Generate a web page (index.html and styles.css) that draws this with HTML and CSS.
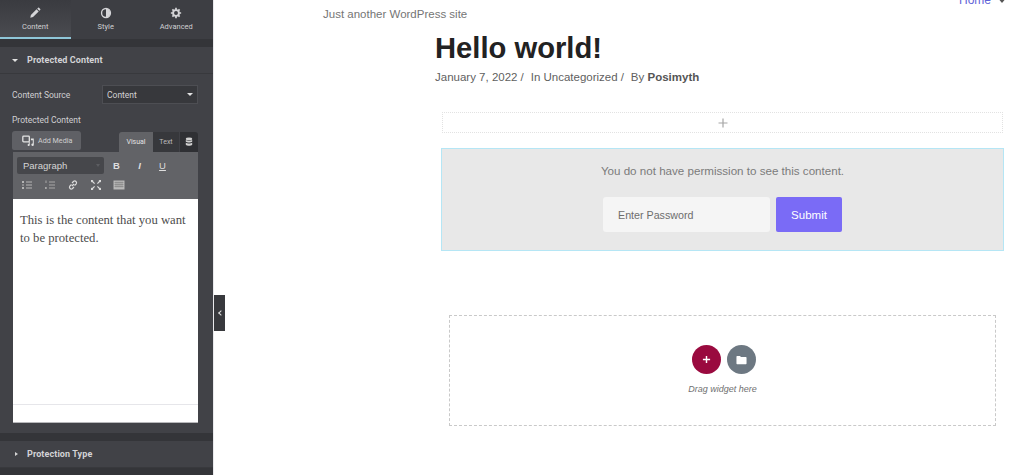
FILE: index.html
```html
<!DOCTYPE html>
<html lang="en">
<head>
<meta charset="utf-8">
<title>Hello world!</title>
<link rel="stylesheet" href="styles.css">
</head>
<body>
<div class="app">
  <aside class="panel">
    <nav class="tabs">
      <div class="tab active">
        <svg class="tab-icon" viewBox="0 0 14 14"><path d="M1.5 12.5l.7-3.2 6.6-6.6 2.5 2.5-6.6 6.6zM9.6 1.9l1-1a.8.8 0 0 1 1.1 0l1.4 1.4a.8.8 0 0 1 0 1.1l-1 1z" fill="#d5d5d8"/></svg>
        <span>Content</span>
      </div>
      <div class="tab">
        <svg class="tab-icon" viewBox="0 0 14 14"><circle cx="7" cy="7" r="5.2" fill="none" stroke="#d5d5d8" stroke-width="1.6"/><path d="M7 2a5 5 0 0 1 0 10z" fill="#d5d5d8"/></svg>
        <span>Style</span>
      </div>
      <div class="tab">
        <svg class="tab-icon" viewBox="0 0 14 14"><circle cx="7" cy="7" r="3.4" fill="none" stroke="#d5d5d8" stroke-width="2.2"/><path d="M7 1v2.4M7 10.6V13M1 7h2.4M10.6 7H13M2.8 2.8l1.7 1.7M9.5 9.5l1.7 1.7M11.2 2.8L9.5 4.5M4.5 9.5l-1.7 1.7" stroke="#d5d5d8" stroke-width="2"/></svg>
        <span>Advanced</span>
      </div>
    </nav>
    <div class="strip"></div>
    <header class="section-head open">
      <i class="caret-down"></i>
      <span>Protected Content</span>
    </header>
    <div class="section-body">
      <div class="field">
        <label>Content Source</label>
        <div class="select">Content<i class="caret-down small"></i></div>
      </div>
      <div class="field-label">Protected Content</div>
      <div class="editor-top">
        <button class="add-media">
          <svg viewBox="0 0 16 14" class="media-icon"><rect x="1" y="1" width="8" height="7" rx="1" fill="none" stroke="#e4e4e4" stroke-width="1.6"/><path d="M11 4h3.5v7.5a1.5 1.5 0 1 1-1.2-1.4V6H11zM9.5 8v4a1.3 1.3 0 1 1-1.2-1.3V8z" fill="#e4e4e4"/></svg>
          Add Media
        </button>
        <div class="mode-tabs">
          <span class="mode on">Visual</span>
          <span class="mode">Text</span>
          <span class="mode db">
            <svg viewBox="0 0 10 12" class="db-icon"><ellipse cx="5" cy="2.2" rx="4" ry="1.7" fill="#d0d0d0"/><path d="M1 3.6c1.5 1.3 6.500 1.300 8 0v2c-1.500 1.300-6.500 1.300-8 0zM1 7c1.500 1.300 6.500 1.300 8 0v2.400c-1.500 1.800-6.500 1.800-8 0z" fill="#d0d0d0"/></svg>
          </span>
        </div>
      </div>
      <div class="toolbar">
        <div class="tool-row">
          <div class="format">Paragraph<i class="fmt-caret"></i></div>
          <b class="tool t-b">B</b>
          <i class="tool t-i">I</i>
          <u class="tool t-u">U</u>
        </div>
        <div class="tool-row icons">
          <svg viewBox="0 0 12 12" class="ticon"><path d="M1 2h2v2H1zM1 8h2v2H1zM5 2.500h6v1H5zM5 8.500h6v1H5zM5 5.500h6v1H5zM1 5.500h2v1H1z" fill="#b5b5b5"/></svg>
          <svg viewBox="0 0 12 12" class="ticon"><path d="M1.500 1.500h1v2.500h-1zM1 8h2v.8H2v.4h1v.8H1zM5 2.500h6v1H5zM5 8.500h6v1H5zM5 5.500h6v1H5z" fill="#a8a8a8"/></svg>
          <svg viewBox="0 0 12 12" class="ticon"><path d="M5 7l2-2M4.500 5.500L2.800 7.200a1.800 1.800 0 0 0 2.500 2.500L7 8M7.500 6.500l1.700-1.700a1.800 1.800 0 0 0-2.500-2.500L5 4" fill="none" stroke="#dcdcdc" stroke-width="1.200"/></svg>
          <svg viewBox="0 0 12 12" class="ticon"><path d="M1 1h2.500L2.700 1.800 5 4.200 4.200 5 1.800 2.700 1 3.500zM11 1v2.500l-.8-.8L7.800 5 7 4.200l2.300-2.400L8.500 1zM1 11V8.500l.8.800L4.200 7l.8.800-2.300 2.400.8.800zM11 11H8.500l.8-.8L7 7.800l.8-.8 2.400 2.300.8-.8z" fill="#dcdcdc"/></svg>
          <svg viewBox="0 0 12 12" class="ticon"><path d="M.5 1.500h11v9H.5z" fill="#b9b9b9"/><path d="M1.500 3.500h9M1.500 5.500h9M1.500 7.500h9M3 2.500v6M5 2.500v6M7 2.500v6M9 2.500v6" stroke="#777" stroke-width=".5"/></svg>
        </div>
      </div>
      <div class="editor">
        <p class="editor-text">This is the content that you want to be protected.</p>
        <div class="editor-foot"></div>
      </div>
    </div>
    <div class="strip"></div>
    <header class="section-head">
      <i class="caret-right"></i>
      <span>Protection Type</span>
    </header>
    <div class="strip fill"></div>
  </aside>

  <main class="preview">
    <div class="handle"><i class="handle-arrow"></i></div>
    <div class="site-head">
      <span class="tagline">Just another WordPress site</span>
      <span class="nav-link">Home<i class="nav-caret"></i></span>
    </div>
    <div class="content">
      <h1 class="title">Hello world!</h1>
      <p class="meta"><span>January 7, 2022</span><span class="sep">/</span><span>In Uncategorized</span><span class="sep">/</span><span>By <b>Posimyth</b></span></p>
      <div class="add-row">
        <svg viewBox="0 0 10 10" class="add-plus"><path d="M5 .5v9M.5 5h9" stroke="#a6a6a6" stroke-width="1.200"/></svg>
      </div>
      <section class="protected">
        <p class="notice">You do not have permission to see this content.</p>
        <form class="pw-form">
          <div class="pw-input">Enter Password</div>
          <div class="pw-submit">Submit</div>
        </form>
      </section>
      <section class="dropzone">
        <div class="drop-btns">
          <span class="circle plus">
            <svg viewBox="0 0 10 10" class="circle-plus"><path d="M5 1v8M1 5h8" stroke="#fff" stroke-width="1.600"/></svg>
          </span>
          <span class="circle folder">
            <svg viewBox="0 0 12 10" class="circle-folder"><path d="M.5 1.200C.5.800.8.500 1.200.500h3l1.300 1.300h5.300c.4 0 .7.300.7.700v6.300c0 .4-.3.700-.7.700H1.200c-.4 0-.7-.3-.7-.7z" fill="#fff"/></svg>
          </span>
        </div>
        <p class="drop-text">Drag widget here</p>
      </section>
    </div>
  </main>
</div>
</body>
</html>
```

FILE: styles.css
```css
* { box-sizing: border-box; }
html, body { margin: 0; padding: 0; height: 100%; overflow: hidden; background: #fff; }
body { font-family: "Liberation Sans", Arial, sans-serif; }

.app { display: flex; width: 1024px; height: 475px; overflow: hidden; }

.panel {
  width: 214px;
  flex: none;
  height: 475px;
  background: #414247;
  color: #d5d5d8;
  font-family: Roboto, "Liberation Sans", sans-serif;
  display: flex;
  flex-direction: column;
  border-right: 1px solid #e9e9ec;
  overflow: hidden;
}

.tabs { display: flex; height: 39px; flex: none; background: #3d3e43; }
.tab {
  width: 70.5px;
  display: flex;
  flex-direction: column;
  align-items: center;
  padding-top: 7px;
  font-size: 7.500px;
  line-height: 10px;
  color: #cfcfd2;
}
.tab.active { border-bottom: 2px solid #8fc6d8; background: linear-gradient(#3a3b40, #4a4b50); }
.tab-icon { width: 12px; height: 12px; margin-bottom: 3px; display: block; }

.strip { height: 8px; flex: none; background: #343539; }
.strip.fill { flex: 1; }

.section-head {
  height: 27px;
  flex: none;
  display: flex;
  align-items: center;
  padding-left: 12px;
  font-size: 9px;
  font-weight: 700;
  color: #d3d3d6;
  border-bottom: 1px solid #38393d;
  letter-spacing: .1px;
}
.section-head span { margin-left: 9px; }

.caret-down {
  display: block;
  width: 0; height: 0;
  border-left: 3px solid transparent;
  border-right: 3px solid transparent;
  border-top: 3px solid #e2e2e2;
}
.caret-right {
  display: block;
  margin-left: 3px;
  width: 0; height: 0;
  border-top: 2.500px solid transparent;
  border-bottom: 2.500px solid transparent;
  border-left: 3px solid #d5d5d5;
}

.section-body { padding: 11px 15px 10px 12px; flex: none; height: 359px; }

.field { display: flex; align-items: center; justify-content: space-between; height: 19px; font-size: 8.500px; color: #cfcfd2; }
.field label { display: block; }
.select {
  width: 96px;
  height: 19px;
  background: #37383c;
  border: 1px solid #4d4e53;
  display: flex;
  align-items: center;
  justify-content: space-between;
  padding: 0 4px;
  font-size: 8.500px;
  color: #d2d2d5;
}
.field-label { margin-top: 10px; height: 12px; line-height: 12px; font-size: 8.500px; color: #cfcfd2; }

.editor-top { margin-top: 5px; display: flex; justify-content: space-between; align-items: flex-end; height: 21px; }
.add-media {
  width: 69px;
  height: 19px;
  margin-bottom: 2px;
  padding: 0 0 0 10px;
  background: #5f6065;
  border: 0;
  border-radius: 3px 3px 2px 2px;
  color: #cfcfcf;
  font-family: Roboto, "Liberation Sans", sans-serif;
  font-size: 7.200px;
  display: flex;
  align-items: center;
  gap: 3px;
}
.media-icon { width: 13px; height: 12px; flex: none; }

.mode-tabs { display: flex; margin-left: auto; height: 20px; }
.mode {
  width: 26px;
  display: flex;
  align-items: center;
  justify-content: center;
  font-size: 7px;
  background: #37383c;
  color: #bdbdbd;
}
.mode.on { width: 34px; background: #626367; color: #e2e2e2; border-radius: 3px 0 0 0; }
.mode.db { width: 18px; margin-left: 1px; background: #2f3034; border-radius: 0 3px 0 0; }
.db-icon { width: 8px; height: 10px; }

.toolbar { margin-left: 1px; height: 47px; background: #626367; padding: 5px 4px 0 4px; }
.tool-row { display: flex; align-items: center; height: 17px; }
.format {
  width: 87px;
  height: 17px;
  background: #46474b;
  border-radius: 2px;
  padding-left: 6px;
  display: flex;
  align-items: center;
  justify-content: space-between;
  font-family: "Liberation Sans", sans-serif;
  font-size: 9.500px;
  color: #d5d5d5;
}
.fmt-caret {
  margin-right: 4px;
  width: 0; height: 0;
  border-left: 2.500px solid transparent;
  border-right: 2.500px solid transparent;
  border-top: 3px solid #5c5d61;
}
.tool {
  width: 23px;
  text-align: center;
  font-family: "Liberation Sans", sans-serif;
  font-size: 9.500px;
  color: #dedede;
}
.t-b { margin-left: 1px; }
.t-i { font-weight: 700; }
.tool-row.icons { margin-top: 2px; padding-left: 4px; gap: 11px; }
.ticon { width: 12px; height: 12px; flex: none; }

.editor {
  margin-left: 1px;
  height: 224px;
  background: #fff;
  border-bottom: 1px solid #b8b8bb;
  display: flex;
  flex-direction: column;
  justify-content: space-between;
}
.editor-text {
  margin: 0;
  padding: 12px 7px 0 7px;
  font-family: "Liberation Serif", Georgia, serif;
  font-size: 12.700px;
  line-height: 18px;
  color: #4d4d4d;
}
.editor-foot { height: 18px; border-top: 1px solid #e6e6ea; }

.preview { position: relative; flex: 1; height: 475px; }

.handle {
  position: absolute;
  left: 0;
  top: 295px;
  width: 11px;
  height: 36px;
  background: #38393d;
  display: flex;
  align-items: center;
  justify-content: center;
}
.handle-arrow {
  width: 4px; height: 4px;
  border-left: 1px solid #e0e0e0;
  border-bottom: 1px solid #e0e0e0;
  transform: rotate(45deg);
  margin-left: 2px;
}

.site-head {
  height: 21px;
  padding-left: 109px;
  display: flex;
  align-items: flex-start;
  position: relative;
}
.tagline { margin-top: 7px; font-size: 11.500px; line-height: 14px; color: #757575; }
.nav-link {
  position: absolute;
  left: 745px;
  top: -7px;
  font-size: 12px;
  line-height: 14px;
  color: #5f63d8;
  white-space: nowrap;
}
.nav-caret {
  position: absolute;
  left: 38px;
  top: 4px;
  width: 0; height: 0;
  border-left: 5px solid transparent;
  border-right: 5px solid transparent;
  border-top: 6px solid #555;
}

.content { padding-left: 221px; }
.title {
  margin: 8px 0 0 0;
  height: 38px;
  font-size: 29.200px;
  line-height: 38px;
  font-weight: 700;
  color: #222;
}
.meta {
  margin: 3px 0 0 0;
  height: 14px;
  font-size: 11.500px;
  line-height: 14px;
  color: #5f5f5f;
  display: flex;
}
.meta b { color: #555; }
.sep { margin: 0 7px 0 3px; }

.add-row {
  margin: 28px 0 0 7px;
  width: 561px;
  height: 21px;
  border: 1px dotted #e2e2e2;
  display: flex;
  align-items: center;
  justify-content: center;
}
.add-plus { width: 10px; height: 10px; }

.protected {
  margin: 15px 0 0 6px;
  width: 563px;
  height: 103px;
  background: #e8e8e8;
  border: 1px solid #b5e6f5;
  display: flex;
  flex-direction: column;
  align-items: center;
}
.notice { margin: 15px 0 0 0; height: 14px; font-size: 11.600px; line-height: 14px; color: #7b7b7b; }
.pw-form { display: flex; margin-top: 19px; gap: 6px; }
.pw-input {
  width: 167px;
  height: 35px;
  background: #f5f5f5;
  border-radius: 3px;
  padding-left: 15px;
  display: flex;
  align-items: center;
  font-size: 10.700px;
  color: #6d6d6d;
}
.pw-submit {
  width: 66px;
  height: 35px;
  background: #7a6bf6;
  border-radius: 2px;
  display: flex;
  align-items: center;
  justify-content: center;
  font-size: 11.500px;
  color: #fff;
}

.dropzone {
  margin: 64px 0 0 14px;
  width: 547px;
  height: 111px;
  border: 1px dashed #c9c9c9;
  display: flex;
  flex-direction: column;
  align-items: center;
}
.drop-btns { display: flex; gap: 6px; margin-top: 29px; margin-left: 2px; }
.circle { width: 29px; height: 29px; border-radius: 50%; display: flex; align-items: center; justify-content: center; }
.circle.plus { background: #9a0a3f; }
.circle.folder { background: #6d7882; }
.circle-plus { width: 9px; height: 9px; }
.circle-folder { width: 11px; height: 10px; }
.drop-text { margin: 9px 0 0 0; font-size: 9px; line-height: 12px; font-style: italic; color: #707070; }
```
